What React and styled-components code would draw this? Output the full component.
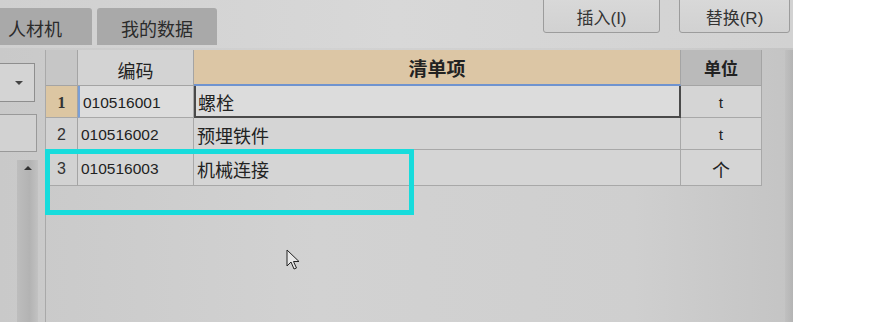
import React from 'react';
import styled, { createGlobalStyle } from 'styled-components';

const Global = createGlobalStyle`
  html, body { margin: 0; padding: 0; }
  body {
    width: 875px; height: 322px; overflow: hidden; background: #fff;
    font-family: "Liberation Sans", "Noto Sans CJK SC", sans-serif;
  }
`;

const Page = styled.div`
  display: flex;
  width: 875px;
  height: 322px;
`;

const Screen = styled.div`
  position: relative;
  width: 793px;
  height: 322px;
  display: flex;
  flex-direction: column;
  overflow: hidden;
  background: linear-gradient(90deg, #c9c9c9 0%, #d2d2d2 40%, #cfcfcf 80%, #c4c4c4 100%);
`;

const Strip = styled.div`
  flex: 1;
  background: #fff;
`;

const TopBar = styled.div`
  display: flex;
  align-items: flex-start;
  height: 48px;
  flex: none;
  background: linear-gradient(90deg, #d0d0d0, #d8d8d8 50%, #d2d2d2);
`;

const Tabs = styled.div`
  display: flex;
  gap: 5px;
  margin-top: 8px;
  margin-left: -22px;
`;

const Tab = styled.div`
  width: ${p => p.$w}px;
  height: 37px;
  display: flex;
  align-items: center;
  justify-content: center;
  background: #a9a9a9;
  border-radius: 3px 3px 0 0;
  color: #2b2b2b;
  font-size: 18px;
  padding-top: 3px;
  box-sizing: border-box;
`;

const Buttons = styled.div`
  display: flex;
  gap: 19px;
  margin-left: auto;
  margin-right: 3px;
  margin-top: -4px;
`;

const Button = styled.div`
  width: ${p => p.$w}px;
  height: 37px;
  box-sizing: border-box;
  border: 1px solid #9c9c9c;
  border-radius: 3px;
  background: linear-gradient(#d9d9d9, #d1d1d1);
  display: flex;
  align-items: center;
  justify-content: center;
  padding-top: 4px;
  color: #333;
  font-size: 17px;
`;

const Body = styled.div`
  display: flex;
  flex: 1;
  min-height: 0;
`;

const LeftPanel = styled.div`
  width: 45px;
  flex: none;
  display: flex;
  flex-direction: column;
`;

const Dropdown = styled.div`
  margin-top: 15px;
  width: 35px;
  height: 39px;
  box-sizing: border-box;
  border: 1px solid #8e8e8e;
  border-left: none;
  background: #d4d4d4;
  display: flex;
  align-items: center;
  justify-content: flex-end;
  padding-right: 11px;
`;

const Caret = styled.div`
  width: 0; height: 0;
  border-left: 4px solid transparent;
  border-right: 4px solid transparent;
  border-top: 4px solid #444;
`;

const Box = styled.div`
  margin-top: 12px;
  width: 37px;
  height: 38px;
  box-sizing: border-box;
  border: 1px solid #999;
  border-left: none;
  background: #d2d2d2;
`;

const ScrollTrack = styled.div`
  margin: 8px 0 0 17px;
  width: 21px;
  flex: 1;
  background: linear-gradient(90deg, #bdbdbd, #b3b3b3 60%, #c2c2c2);
  display: flex;
  justify-content: center;
  padding-top: 6px;
  box-sizing: border-box;
`;

const UpArrow = styled.div`
  width: 0; height: 0;
  border-left: 4px solid transparent;
  border-right: 4px solid transparent;
  border-bottom: 4px solid #333;
`;

const GridArea = styled.div`
  position: relative;
  flex: 1;
  margin-top: 2px;
  display: flex;
  border-left: 1px solid #a9a9a9;
`;

const Table = styled.div`
  display: grid;
  grid-template-columns: 32px 116px 487px 81px;
  grid-template-rows: 36px 32px 32px 36px;
  align-self: flex-start;
`;

const HeadCell = styled.div`
  box-sizing: border-box;
  background: ${p => p.$bg};
  border-right: 1px solid #a4a4a4;
  border-bottom: ${p => p.$blue ? '2px solid #6f93cf' : '1px solid #a4a4a4'};
  display: flex;
  align-items: center;
  justify-content: center;
  padding-top: ${p => p.$low ? 4 : 0}px;
  font-size: ${p => p.$size || 17}px;
  font-weight: ${p => p.$bold ? 700 : 400};
  color: #222;
`;

const NumCell = styled.div`
  box-sizing: border-box;
  background: ${p => p.$active ? '#dcc6a2' : '#d2d2d2'};
  border-right: 1px solid #a4a4a4;
  border-bottom: 1px solid #a8a8a8;
  display: flex;
  align-items: center;
  justify-content: center;
  font-family: ${p => p.$active ? '"Liberation Serif", serif' : '"Liberation Sans", sans-serif'};
  font-weight: ${p => p.$active ? 700 : 400};
  font-size: 16px;
  color: #333;
  padding-top: 3px;
`;

const Cell = styled.div`
  box-sizing: border-box;
  background: ${p => p.$light ? '#dcdcdc' : '#d5d5d5'};
  border-right: 1px solid #a8a8a8;
  border-bottom: 1px solid #a8a8a8;
  border-left: ${p => p.$blueLeft ? '2px solid #7b9fd6' : 'none'};
  display: flex;
  align-items: center;
  justify-content: ${p => p.$center ? 'center' : 'flex-start'};
  padding-left: ${p => p.$center ? 0 : 3}px;
  padding-top: 2px;
  font-size: ${p => p.$cn ? 18 : 15.5}px;
  color: #222;
`;

const EditCell = styled(Cell)`
  border: 2px solid #4a4a4a;
  border-top: none;
  padding-left: 2px;
`;

const RightEdge = styled.div`
  margin-left: auto;
  width: 8px;
  background: linear-gradient(90deg, #c0c0c0, #b4b4b4);
`;

const Highlight = styled.div`
  position: absolute;
  left: -1px;
  top: 99px;
  width: 369px;
  height: 66px;
  box-sizing: border-box;
  border: 5px solid #17dcdc;
  pointer-events: none;
`;

const Cursor = styled.svg`
  position: absolute;
  left: 286px;
  top: 249px;
`;

const rows = [
  { n: '1', code: '010516001', name: '螺栓', unit: 't' },
  { n: '2', code: '010516002', name: '预埋铁件', unit: 't' },
  { n: '3', code: '010516003', name: '机械连接', unit: '个' },
];

export default function App() {
  return (
    <Page>
      <Global />
      <Screen>
        <TopBar>
          <Tabs>
            <Tab $w={114}>人材机</Tab>
            <Tab $w={120}>我的数据</Tab>
          </Tabs>
          <Buttons>
            <Button $w={117}>插入(I)</Button>
            <Button $w={111}>替换(R)</Button>
          </Buttons>
        </TopBar>
        <Body>
          <LeftPanel>
            <Dropdown><Caret /></Dropdown>
            <Box />
            <ScrollTrack><UpArrow /></ScrollTrack>
          </LeftPanel>
          <GridArea>
            <Table>
              <HeadCell $bg="#c6c6c6" />
              <HeadCell $bg="#d3d3d3" $size={18} $low>编码</HeadCell>
              <HeadCell $bg="#dcc6a5" $bold $blue $size={19}>清单项</HeadCell>
              <HeadCell $bg="#bababa" $bold $size={17}>单位</HeadCell>
              {rows.map((r, i) => (
                <React.Fragment key={r.n}>
                  <NumCell $active={i === 0}>{r.n}</NumCell>
                  <Cell $light={i === 0} $blueLeft={i === 0}>{r.code}</Cell>
                  {i === 0
                    ? <EditCell $light $cn>{r.name}</EditCell>
                    : <Cell $cn>{r.name}</Cell>}
                  <Cell $center $cn={r.unit === '个'}>{r.unit}</Cell>
                </React.Fragment>
              ))}
            </Table>
            <RightEdge />
            <Highlight />
          </GridArea>
        </Body>
        <Cursor width="14" height="22" viewBox="0 0 14 22">
          <path d="M1 1 L1 17 L5 13 L8 20 L10.5 19 L7.5 12.5 L13 12.5 Z" fill="#e8e8e8" stroke="#222" strokeWidth="1" strokeLinejoin="miter" />
        </Cursor>
      </Screen>
      <Strip />
    </Page>
  );
}
